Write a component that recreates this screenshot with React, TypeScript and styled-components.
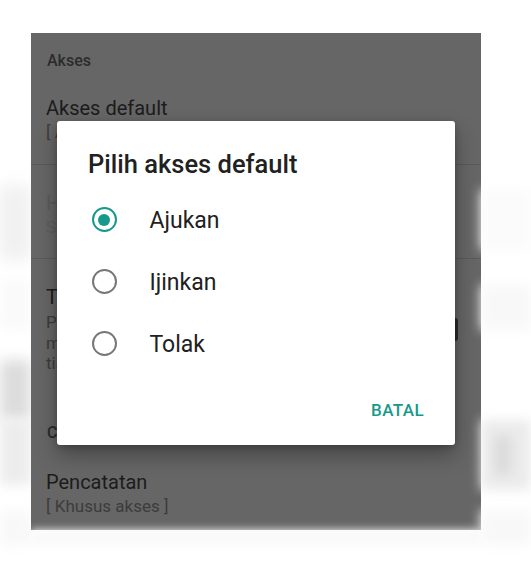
import React from "react";
import styled, { createGlobalStyle } from "styled-components";

const GlobalStyle = createGlobalStyle`
  html, body { margin: 0; padding: 0; background: #ffffff; }
  body { font-family: Roboto, "Noto Sans", "Liberation Sans", sans-serif; -webkit-font-smoothing: antialiased; }
  * { box-sizing: border-box; }
`;

const Page = styled.div`
  width: 531px;
  height: 569px;
  display: flex;
  overflow: hidden;
  background: #ffffff;
`;

const Gutter = styled.div<{ $w: number }>`
  width: ${(p) => p.$w}px;
  flex: none;
  display: flex;
  flex-direction: column;
`;

const Band = styled.div<{ $top: number; $h: number; $tone: string; $blur?: number }>`
  margin-top: ${(p) => p.$top}px;
  height: ${(p) => p.$h}px;
  background: ${(p) => p.$tone};
  filter: blur(${(p) => p.$blur ?? 6}px);
  display: flex;
  align-items: center;
`;

const Blob = styled.div<{ $left: number; $w: number; $h: number; $tone: string }>`
  margin-left: ${(p) => p.$left}px;
  width: ${(p) => p.$w}px;
  height: ${(p) => p.$h}px;
  background: ${(p) => p.$tone};
  border-radius: 6px;
`;

const Center = styled.div`
  width: 450px;
  flex: none;
  display: flex;
  flex-direction: column;
`;

const Screen = styled.div`
  margin-top: 33px;
  height: 497px;
  background: #666666;
  position: relative;
  display: flex;
  flex-direction: column;
  overflow: hidden;
`;

const Category = styled.div<{ $pt: number }>`
  padding: ${(p) => p.$pt}px 16px 0;
  font-size: 16px;
  line-height: 20px;
  font-weight: 500;
  color: #292c2b;
`;

const Item = styled.div<{ $pt: number; $pb: number; $divider?: boolean }>`
  padding: ${(p) => p.$pt}px 0 ${(p) => p.$pb}px 15px;
  display: flex;
  align-items: center;
  border-bottom: ${(p) => (p.$divider ? "1px solid #5a5a5a" : "none")};
`;

const ItemText = styled.div`
  flex: 1;
  display: flex;
  flex-direction: column;
  white-space: nowrap;
  overflow: hidden;
`;

const ItemTitle = styled.div<{ $disabled?: boolean }>`
  font-size: 20px;
  line-height: 24px;
  color: ${(p) => (p.$disabled ? "#5b5b5b" : "#1c1c1c")};
`;

const ItemSummary = styled.div<{ $disabled?: boolean; $lh?: number; $mt?: number }>`
  font-size: 17px;
  line-height: ${(p) => p.$lh ?? 24}px;
  margin-top: ${(p) => p.$mt ?? 0}px;
  color: ${(p) => (p.$disabled ? "#5d5d5d" : "#3c3c3c")};
`;

const SwitchEdge = styled.div`
  width: 36px;
  height: 23px;
  margin-right: 23px;
  margin-left: 16px;
  border-radius: 3px;
  background: #2b2b2b;
  flex: none;
`;

const Dialog = styled.div`
  position: absolute;
  left: 26px;
  top: 88px;
  width: 398px;
  height: 324px;
  background: #ffffff;
  border-radius: 3px;
  box-shadow: 0 10px 22px rgba(0, 0, 0, 0.32), 0 2px 6px rgba(0, 0, 0, 0.2);
  padding: 27px 31px 0 0;
  display: flex;
  flex-direction: column;
`;

const DialogTitle = styled.div`
  padding-left: 31px;
  font-size: 25.5px;
  line-height: 32px;
  font-weight: 500;
  color: #212121;
`;

const Options = styled.div`
  margin-top: 8.5px;
  display: flex;
  flex-direction: column;
`;

const Option = styled.label`
  height: 62px;
  display: flex;
  align-items: center;
  padding-left: 34.5px;
  cursor: pointer;
`;

const RadioRing = styled.span<{ $checked: boolean }>`
  width: 25px;
  height: 25px;
  border-radius: 50%;
  border: 2.5px solid ${(p) => (p.$checked ? "#16998a" : "#777777")};
  display: flex;
  align-items: center;
  justify-content: center;
  flex: none;
`;

const RadioDot = styled.span`
  width: 12px;
  height: 12px;
  border-radius: 50%;
  background: #16998a;
`;

const OptionLabel = styled.span`
  margin-left: 33px;
  font-size: 23px;
  line-height: 28px;
  color: #212121;
  padding-top: 3px;
`;

const Actions = styled.div`
  margin-top: 25.5px;
  display: flex;
  justify-content: flex-end;
`;

const TextButton = styled.button`
  border: none;
  background: none;
  padding: 0;
  font-family: inherit;
  font-size: 17px;
  line-height: 20px;
  font-weight: 500;
  letter-spacing: 0.4px;
  color: #16998a;
`;

const options = ["Ajukan", "Ijinkan", "Tolak"];

export default function App() {
  const selected = 0;
  return (
    <>
      <GlobalStyle />
      <Page>
        <Gutter $w={31}>
          <Band $top={185} $h={75} $tone="#f0f0f0" $blur={8} />
          <Band $top={20} $h={50} $tone="#fafafa" />
          <Band $top={30} $h={60} $tone="#dcdcdc" $blur={7} />
          <Band $top={0} $h={65} $tone="#ececec" />
          <Band $top={25} $h={35} $tone="#f8f8f8" />
        </Gutter>
        <Center>
          <Screen>
            <Category $pt={18}>Akses</Category>
            <Item $pt={25} $pb={20} $divider>
              <ItemText>
                <ItemTitle>Akses default</ItemTitle>
                <ItemSummary>[ Ajukan ]</ItemSummary>
              </ItemText>
            </Item>
            <Item $pt={26} $pb={19} $divider>
              <ItemText>
                <ItemTitle $disabled>Hanya aplikasi</ItemTitle>
                <ItemSummary $disabled>Semua aplikasi</ItemSummary>
              </ItemText>
            </Item>
            <Item $pt={26} $pb={31}>
              <ItemText>
                <ItemTitle>Tampilkan pemberitahuan</ItemTitle>
                <ItemSummary $lh={20.5} $mt={3}>
                  Pemberitahuan muncul
                  <br />
                  meminta akses
                  <br />
                  tiap kali
                </ItemSummary>
              </ItemText>
              <SwitchEdge />
            </Item>
            <Category $pt={18}>Catatan</Category>
            <Item $pt={27} $pb={20}>
              <ItemText>
                <ItemTitle>Pencatatan</ItemTitle>
                <ItemSummary>[ Khusus akses ]</ItemSummary>
              </ItemText>
            </Item>

            <Dialog role="dialog" aria-label="Pilih akses default">
              <DialogTitle>Pilih akses default</DialogTitle>
              <Options>
                {options.map((o, i) => (
                  <Option key={o}>
                    <RadioRing $checked={i === selected}>
                      {i === selected && <RadioDot />}
                    </RadioRing>
                    <OptionLabel>{o}</OptionLabel>
                  </Option>
                ))}
              </Options>
              <Actions>
                <TextButton>BATAL</TextButton>
              </Actions>
            </Dialog>
          </Screen>
          <Band $top={0} $h={15} $tone="#f9f9f9" $blur={4} />
        </Center>
        <Gutter $w={50}>
          <Band $top={190} $h={60} $tone="#fbfbfb" />
          <Band $top={35} $h={45} $tone="#f8f8f8" />
          <Band $top={90} $h={70} $tone="#ebebeb">
            <Blob $left={14} $w={16} $h={40} $tone="#dadada" />
          </Band>
          <Band $top={20} $h={35} $tone="#f8f8f8" />
        </Gutter>
      </Page>
    </>
  );
}
